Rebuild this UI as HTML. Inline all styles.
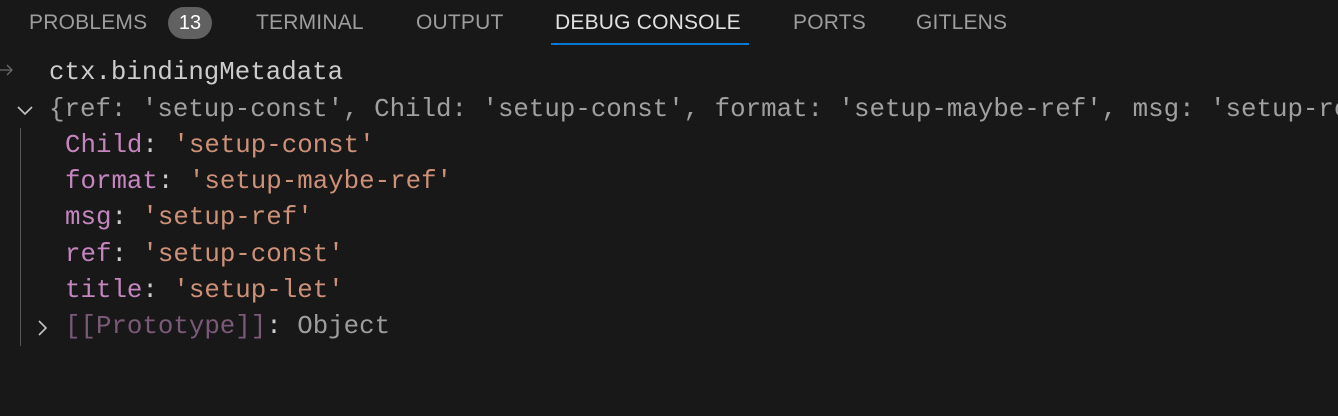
<!DOCTYPE html>
<html><head><style>
body{margin:0;width:1338px;height:416px;background:#181818;overflow:hidden;position:relative}
.t{position:absolute;top:11px;font:21px "Liberation Sans",sans-serif;color:#9d9d9d;white-space:nowrap;letter-spacing:0.2px}
.badge{position:absolute;left:168px;top:7px;width:44px;height:32px;border-radius:16px;background:#616161;color:#fff;font:20px "Liberation Sans",sans-serif;text-align:center;line-height:32px}
.ul{position:absolute;left:551px;top:43px;width:198px;height:2px;background:#0078d4}
.l{position:absolute;font:25.8px "Liberation Mono",monospace;white-space:pre;line-height:30px}
.k{color:#c586c0}.s{color:#ce9178}.g{color:#cccccc}.p{color:#7a5a78}.o{color:#9d9d9d}
.guide{position:absolute;left:20px;top:128px;width:1px;height:218px;background:#585858}
</style></head><body>
<div class="t" style="left:29px">PROBLEMS</div>
<div class="badge">13</div>
<div class="t" style="left:256px">TERMINAL</div>
<div class="t" style="left:416px">OUTPUT</div>
<div class="t" style="left:555px;color:#e0e0e0">DEBUG CONSOLE</div>
<div class="t" style="left:793px">PORTS</div>
<div class="t" style="left:916px">GITLENS</div>
<div class="ul"></div>
<svg style="position:absolute;left:0;top:64px" width="14" height="12"><path d="M0 6 H12 M7 1 L12 6 L7 11" stroke="#6a6a6a" stroke-width="1.3" fill="none"/></svg>
<div class="l g" style="left:49px;top:58px">ctx.bindingMetadata</div>
<svg style="position:absolute;left:16px;top:103px" width="18" height="14"><path d="M2 4 L9 11 L16 4" stroke="#c5c5c5" stroke-width="1.6" fill="none"/></svg>
<div class="l" style="left:49px;top:95px;color:#a0a0a0">{ref: 'setup-const', Child: 'setup-const', format: 'setup-maybe-ref', msg: 'setup-ref'}</div>
<div class="guide"></div>
<div class="l" style="left:65px;top:131px"><span class="k">Child</span><span class="g">: </span><span class="s">'setup-const'</span></div>
<div class="l" style="left:65px;top:167px"><span class="k">format</span><span class="g">: </span><span class="s">'setup-maybe-ref'</span></div>
<div class="l" style="left:65px;top:203px"><span class="k">msg</span><span class="g">: </span><span class="s">'setup-ref'</span></div>
<div class="l" style="left:65px;top:240px"><span class="k">ref</span><span class="g">: </span><span class="s">'setup-const'</span></div>
<div class="l" style="left:65px;top:276px"><span class="k">title</span><span class="g">: </span><span class="s">'setup-let'</span></div>
<svg style="position:absolute;left:36px;top:319px" width="14" height="18"><path d="M3 2 L10 9 L3 16" stroke="#c5c5c5" stroke-width="1.6" fill="none"/></svg>
<div class="l" style="left:65px;top:312px"><span class="p">[[Prototype]]</span><span class="g">: </span><span class="o">Object</span></div>
</body></html>
